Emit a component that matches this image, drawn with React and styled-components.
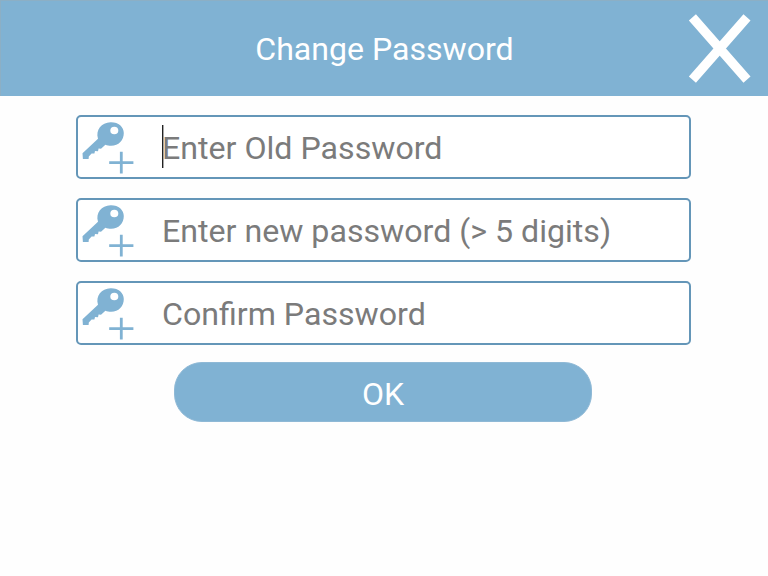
import React, { useState } from "react";
import styled, { createGlobalStyle } from "styled-components";

const fields = [
  { name: "oldPassword", placeholder: "Enter Old Password", caret: true },
  { name: "newPassword", placeholder: "Enter new password (> 5 digits)" },
  { name: "confirmPassword", placeholder: "Confirm Password" },
];

function KeyIcon() {
  return (
    <svg width="60" height="60" viewBox="0 0 60 60">
      <path
        fill="#80b2d3"
        fillRule="evenodd"
        d="M32.6 5.2C40.4 5 45.7 9.6 45.8 16C45.9 23.2 40.6 28.8 33.2 28.8C31 28.8 29 28.4 27.4 27.8L23 31.8L20.6 31.6L20 34.2L17 34L16.4 36.6L13.6 36.6L10.8 39.4L10.6 42L4.9 42L4.5 36.2L20 21.8C17.4 13 23.4 5.4 32.6 5.2ZM36.3 9.7A4 3.8 0 1 0 36.3 17.3A4 3.8 0 1 0 36.3 9.7Z"
      />
      <path d="M31.2 45.7H55.4M43.3 34.8V56.6" stroke="#80b2d3" strokeWidth="2.8" />
    </svg>
  );
}

function App() {
  const [values, setValues] = useState({});

  const handleChange = (e) => {
    setValues({ ...values, [e.target.name]: e.target.value });
  };

  return (
    <Screen>
      <GlobalStyle />
      <Header>
        <Title>Change Password</Title>
        <CloseButton aria-label="Close">
          <svg width="64" height="70" viewBox="0 0 64 70">
            <path d="M4.4 3.4L59 65.6M59 3.4L4.4 65.6" stroke="#fff" strokeWidth="9.4" />
          </svg>
        </CloseButton>
      </Header>
      <Form onSubmit={(e) => e.preventDefault()}>
        {fields.map((field) => (
          <Field key={field.name}>
            <KeyIcon />
            <InputWrap $caret={field.caret && !values[field.name]}>
              <Input
                type="password"
                name={field.name}
                placeholder={field.placeholder}
                value={values[field.name] || ""}
                onChange={handleChange}
              />
            </InputWrap>
          </Field>
        ))}
        <OkButton>OK</OkButton>
      </Form>
    </Screen>
  );
}

const GlobalStyle = createGlobalStyle`
  * {
    box-sizing: border-box;
  }
  body {
    margin: 0;
    background: #fefefe;
    font-family: Roboto, sans-serif;
  }
`;

const Screen = styled.div`
  height: 100vh;
  overflow: hidden;
`;

const Header = styled.header`
  display: grid;
  grid-template-columns: 80px 1fr 80px;
  align-items: center;
  height: 96px;
  background: #80b2d3;
  border-top: 1px solid #8cafc5;
  border-left: 1px solid #8cafc5;
`;

const Title = styled.h1`
  grid-column: 2;
  margin: 0;
  padding-top: 1px;
  color: #fff;
  font-size: 32.1px;
  font-weight: 400;
  line-height: 38px;
  text-align: center;
`;

const CloseButton = styled.button`
  display: flex;
  width: 64px;
  padding: 0;
  border: none;
  background: none;
  cursor: pointer;
`;

const Form = styled.form`
  display: flex;
  flex-direction: column;
  gap: 19px;
  width: 615px;
  margin: 19px 0 0 76px;
`;

const Field = styled.label`
  display: flex;
  align-items: center;
  height: 64px;
  border: 2px solid #6496b8;
  border-radius: 5px;
  background: #fff;
`;

const InputWrap = styled.span`
  position: relative;
  flex: 1;
  margin-left: 24px;

  &::before {
    content: "";
    display: ${(props) => (props.$caret ? "block" : "none")};
    position: absolute;
    top: -2px;
    left: 0;
    width: 1px;
    height: 43px;
    background: #222;
    box-shadow: 1px 0 0 rgba(34, 34, 34, 0.4);
  }
`;

const Input = styled.input`
  display: block;
  width: 100%;
  height: 40px;
  padding: 2px 0 0;
  border: none;
  outline: none;
  background: none;
  color: #222;
  font-family: inherit;
  font-size: 32.15px;

  &::placeholder {
    color: #7b7b7b;
    opacity: 1;
  }
`;

const OkButton = styled.button`
  align-self: center;
  width: 418px;
  height: 60px;
  margin: -2px 1px 0 0;
  padding: 4px 0 0;
  border: 1px solid #8fb9d6;
  border-radius: 28px;
  background: #80b2d3;
  color: #fff;
  font-family: inherit;
  font-size: 32px;
  cursor: pointer;
`;

export default App;
